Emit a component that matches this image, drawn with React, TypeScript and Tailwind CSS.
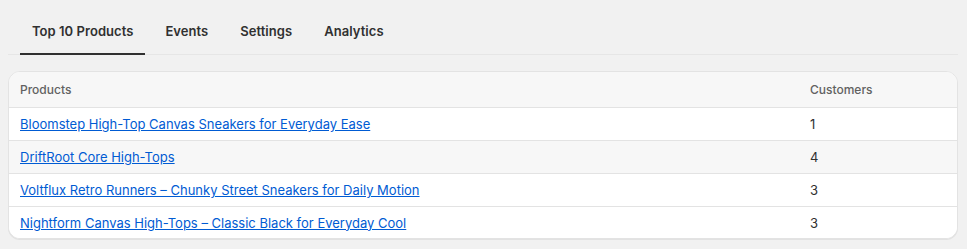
import React from "react";

const tabs = ["Top 10 Products", "Events", "Settings", "Analytics"];

const rows = [
  { name: "Bloomstep High-Top Canvas Sneakers for Everyday Ease", count: 1 },
  { name: "DriftRoot Core High-Tops", count: 4 },
  { name: "Voltflux Retro Runners – Chunky Street Sneakers for Daily Motion", count: 3 },
  { name: "Nightform Canvas High-Tops – Classic Black for Everyday Cool", count: 3 },
];

export default function App() {
  return (
    <div
      className="min-h-[249px] w-full bg-[#f1f1f1] px-2 pt-2 text-[#303030]"
      style={{ fontFamily: "Inter, 'Noto Sans', sans-serif" }}
    >
      <div className="flex gap-2 border-b border-[#e6e6e6] pl-3 w-[950px]">
        {tabs.map((t, i) => (
          <div
            key={t}
            className="relative flex h-[46px] items-center px-3 pt-[2px] text-[13px] font-semibold tracking-[0.05px] text-[#303030]"
          >
            {t}
            {i === 0 && (
              <span className="absolute -bottom-px left-0 right-0 h-[2px] bg-[#303030]" />
            )}
          </div>
        ))}
      </div>

      <div className="mt-4 w-[950px] overflow-hidden rounded-xl border border-[#e3e3e3] bg-white shadow-[0_1px_0_0_rgba(26,26,26,0.07)]">
        <div className="grid h-[36px] grid-cols-[1fr_159px] items-center border-b border-[#e3e3e3] bg-[#f7f7f7] text-[12px] font-medium text-[#616161]">
          <div className="pl-[11px]">Products</div>
          <div className="pl-3">Customers</div>
        </div>
        {rows.map((r, i) => (
          <div
            key={r.name}
            className={`grid grid-cols-[1fr_159px] items-center pt-[2px] text-[13px] ${
              i < rows.length - 1 ? "h-[33px] border-b border-[#e3e3e3]" : "h-[31px]"
            } ${i === 1 ? "bg-[#f7f7f7]" : "bg-white"}`}
          >
            <div className="pl-[11px]">
              <a href="#" className="text-[#005bd3] underline">
                {r.name}
              </a>
            </div>
            <div className="pl-3 text-[#303030]">{r.count}</div>
          </div>
        ))}
      </div>
    </div>
  );
}
